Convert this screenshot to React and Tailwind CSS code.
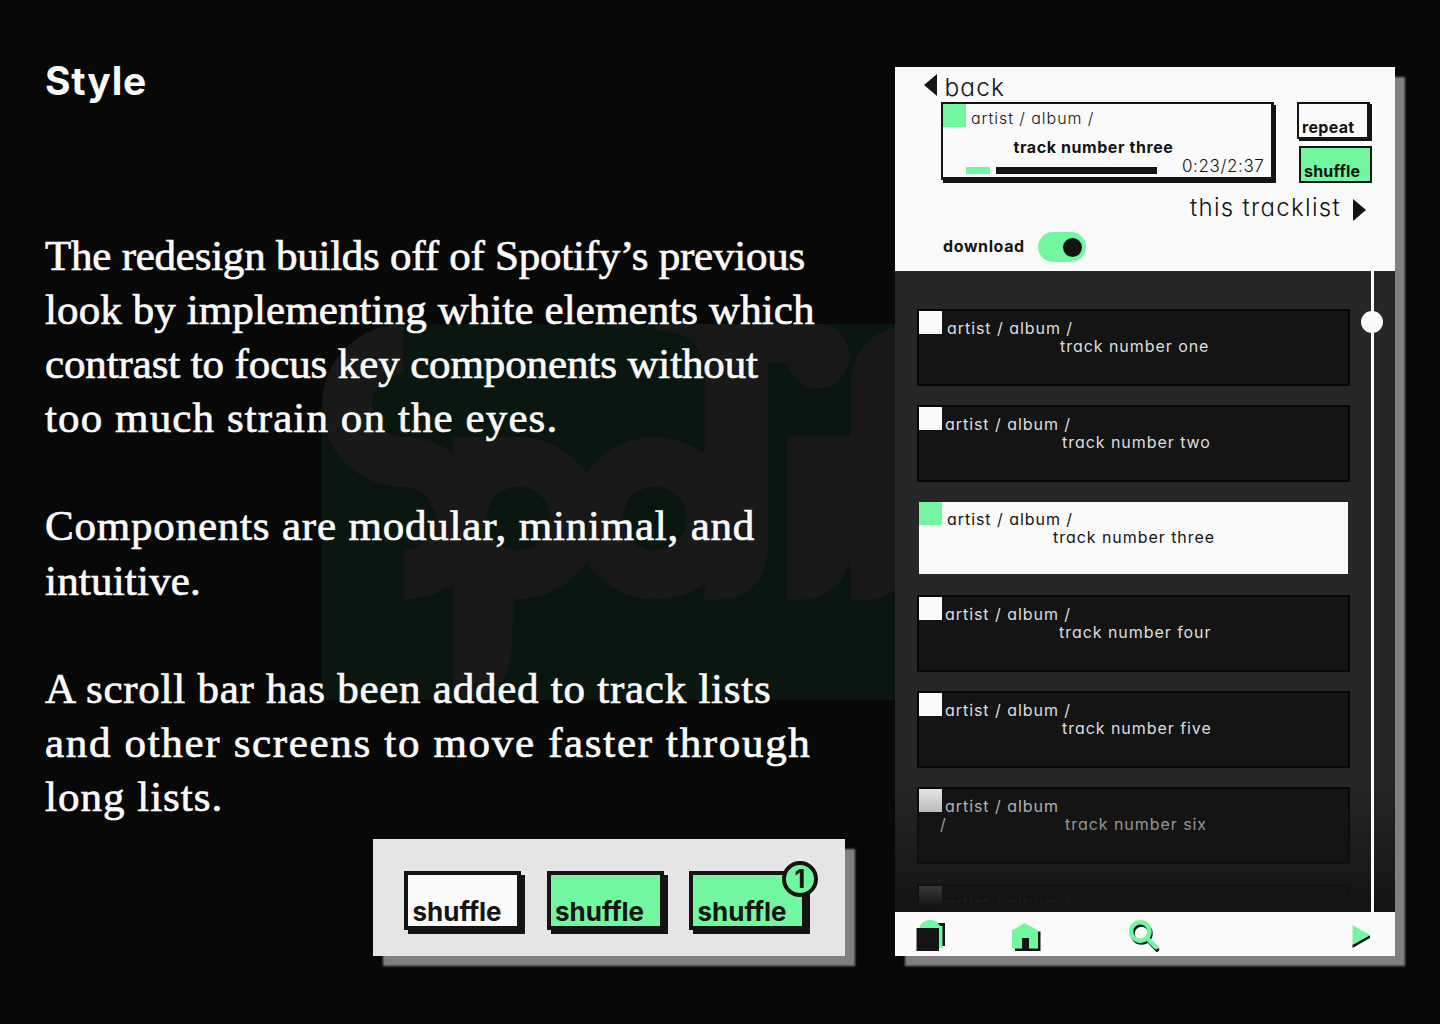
import React from 'react';

const artistText = 'text-[16px] leading-none tracking-[0.95px] whitespace-nowrap [font-feature-settings:"cv11"]';

const tracks = [
  { name: 'one', art: 'pl-[5px]', title: 'ml-[141px]', gap: 'mt-[38px]' },
  { name: 'two', art: 'pl-[3px]', title: 'ml-[143px]', gap: 'mt-[19px]' },
  { name: 'three', art: 'pl-[5px]', title: 'ml-[134px]', gap: 'mt-[18px]', active: true },
  { name: 'four', art: 'pl-[3px]', title: 'ml-[140px]', gap: 'mt-[18px]' },
  { name: 'five', art: 'pl-[3px]', title: 'ml-[143px]', gap: 'mt-[19px]' },
  { name: 'six', art: 'pl-[3px]', title: 'ml-[118px]', gap: 'mt-[19px]', wrapped: true },
  { name: '', art: 'pl-[3px]', title: 'ml-[143px]', gap: 'mt-[20px]' },
];

const copy = [
  ['The redesign builds off of Spotify’s previous', 'tracking-[-0.24px]'],
  ['look by implementing white elements which', 'tracking-[0.1px]'],
  ['contrast to focus key components without', 'tracking-[-0.12px]'],
  ['too much strain on the eyes.', 'tracking-[1.1px]'],
  ['', ''],
  ['Components are modular, minimal, and', 'tracking-[0.8px]'],
  ['intuitive.', 'tracking-[0.2px]'],
  ['', ''],
  ['A scroll bar has been added to track lists', 'tracking-[0.75px]'],
  ['and other screens to move faster through', 'tracking-[1.67px]'],
  ['long lists.', 'tracking-[1px]'],
];

function Watermark() {
  return (
    <svg className="absolute left-[322px] top-[324px]" width="573" height="376" viewBox="31 41 1498 1129" preserveAspectRatio="none" aria-hidden="true">
      <path d="M244 41H1529V1170H31V290C31 152 126 41 244 41Z" fill="#0a1710" />
      <g fill="#191919">
        <path d="M244 41C126 41 31 152 31 288S126 530 244 530C290 530 328 573 328 625S290 720 244 720V868C290 868 337 852 374 822V430C337 396 290 380 244 380C198 380 162 338 162 285S198 190 244 190Z" />
        <path fillRule="evenodd" d="M374 380H545C615 380 680 420 723 490C766 420 830 380 901 380C950 380 995 398 1031 430V190C1031 100 980 60 901 60V41H1328C1373 41 1410 83 1410 138S1373 234 1328 234C1290 234 1256 203 1246 158H1197V700C1197 805 1145 868 1075 868H1031V822C995 852 950 868 901 868C830 868 766 828 723 758C680 828 615 868 530 868C530 1000 528 1060 508 1100C482 1145 430 1166 374 1170ZM545 530C499 530 462 573 462 625S499 720 545 720S628 677 628 625S591 530 545 530ZM901 530C855 530 818 573 818 625S855 720 901 720S984 677 984 625S947 530 901 530Z" />
        <path d="M1247 378H1412V230C1412 140 1460 70 1529 50V838C1508 858 1485 868 1460 868H1412V740C1402 815 1350 868 1285 868H1247Z" />
      </g>
    </svg>
  );
}

function SampleButton({ className, badge }) {
  return (
    <div className={`relative flex h-[59px] w-[117px] items-end border-4 border-[#141414] pb-px pl-[4.5px] shadow-[4px_4px_0_#141414] ${className}`}>
      <span className="text-[26px] leading-none font-bold text-[#141414]">shuffle</span>
      {badge && (
        <span className="absolute -top-[14px] left-[89px] flex size-[36px] items-center justify-center rounded-full border-4 border-[#141414] bg-[#72f7a0] text-[25px] leading-none font-bold text-[#141414]">
          {badge}
        </span>
      )}
    </div>
  );
}

function Track({ track }) {
  const { name, art, title, gap, active, wrapped } = track;
  return (
    <div className={`ml-[22px] h-[77px] w-[433px] shrink-0 ${gap}`}>
      <div className={active ? 'm-[2px] h-[72px] w-[429px] bg-[#fafafa] text-[#141414]' : 'h-full border-[2px] border-[#070707] bg-[#141414] text-[#dedede]'}>
        <div className="flex h-[27px]">
          <div className={active ? 'size-[23px] bg-[#72f7a0]' : 'size-[23px] bg-[#fafafa]'} />
          <span className={`pt-[9px] ${artistText} ${art}`}>{wrapped ? 'artist / album' : 'artist / album /'}</span>
        </div>
        <div className="flex">
          {wrapped && <span className={`ml-[21px] w-[7px] ${artistText}`}>/</span>}
          {name && <span className={`${artistText} ${title}`}>track number {name}</span>}
        </div>
      </div>
    </div>
  );
}

function Phone() {
  return (
    <section className="mt-[67px] flex h-[889px] w-[500px] shrink-0 flex-col bg-[#fafafa] text-[#141414] shadow-[10px_10px_2px_#808080]">
      <header className="flex h-[204px] shrink-0 flex-col">
        <div className="flex h-[35px] pt-[8px] pl-[29px]">
          <svg className="-mt-px" width="13" height="22" viewBox="0 0 13 22"><path d="M13 0v22L0 11z" fill="#141414" /></svg>
          <span className="ml-[7.500px] text-[24.500px] leading-[24px] font-[350] tracking-[1.1px] [font-feature-settings:'cv11']">back</span>
        </div>
        <div className="flex h-[81px] pl-[46px]">
          <div className="h-[78px] w-[333px] border-t-2 border-r-3 border-b-3 border-l-2 border-[#141414] shadow-[2px_3px_0_#141414]">
            <div className="flex h-[35px]">
              <div className="size-[23px] bg-[#72f7a0]" />
              <span className={`pt-[6px] pl-[5px] font-[350] ${artistText}`}>artist / album /</span>
            </div>
            <div className="h-[15px] pl-[70.500px] text-[16px] leading-none font-bold tracking-[0.58px]">track number three</div>
            <div className="flex h-[22px] items-start pl-[23px]">
              <div className="mt-[13px] h-[6.5px] w-[24px] bg-[#72f7a0]" />
              <div className="mt-[13px] ml-[6px] h-[6.5px] w-[161px] bg-[#141414]" />
              <span className="mt-[4px] ml-[25px] text-[17px] leading-none font-light tracking-[0.6px]">0:23/2:37</span>
            </div>
          </div>
          <div className="ml-[23px] w-[75px]">
            <div className="flex h-[37px] w-[73px] items-end border-2 border-r-3 border-[#141414] pb-[2px] pl-[3px] shadow-[2px_2px_0_#141414]">
              <span className="text-[16px] leading-none font-bold tracking-[0.3px]">repeat</span>
            </div>
            <div className="mt-[7px] ml-[2px] flex h-[37px] w-[73px] items-end border-2 border-[#141414] bg-[#72f7a0] pb-[2px] pl-[3px]">
              <span className="text-[16px] leading-none font-bold tracking-[0.2px]">shuffle</span>
            </div>
          </div>
        </div>
        <div className="mt-[13px] flex h-[24px] justify-end pr-[29px]">
          <span className="text-[24px] leading-none font-[350] tracking-[1.3px] [font-feature-settings:'cv11']">this tracklist</span>
          <svg className="mt-[3px] ml-[12px]" width="13" height="22" viewBox="0 0 13 22"><path d="M0 0v22L13 11z" fill="#141414" /></svg>
        </div>
        <div className="mt-[12px] flex h-[30px] pl-[48px]">
          <span className="mt-[6px] w-[95px] text-[16px] leading-none font-bold tracking-[0.6px]">download</span>
          <span className="flex h-[30px] w-[48px] items-center justify-end rounded-full bg-[#72f7a0] pr-[4px]">
            <span className="size-[19px] rounded-full bg-[#141414]" />
          </span>
        </div>
      </header>
      <div className="relative flex h-[641px] flex-col overflow-hidden bg-[#272727]">
        {tracks.map((t) => <Track key={t.name} track={t} />)}
        <div className="absolute inset-x-0 bottom-0 h-[135px] bg-linear-to-b from-[#14141400] to-[#141414] to-[96%]" />
        <div className="absolute top-0 left-[476px] h-full w-[2.5px] bg-[#fafafa]" />
        <div className="absolute top-[39.5px] left-[466px] size-[22px] rounded-full bg-[#fafafa]" />
      </div>
      <nav className="flex h-[44px] items-start pt-[7px] pl-[21px]">
        <svg width="30" height="34" viewBox="0 0 30 34">
          <path d="M7 4h22v23H7z" fill="#141414" />
          <path d="M3.500 8C5.500 3 10 1 14.500 1S22 3 24 7h2.500v22H5z" fill="#72f7a0" />
          <path d="M.5 9H23v23H.5z" fill="#141414" />
        </svg>
        <svg className="ml-[64px]" width="32" height="34" viewBox="0 0 32 34">
          <path d="M5 29h2L28 12.500h2.500V32H5z" fill="#141414" />
          <path d="M2 11.500 14.500 4 28 11.500v18h-9V19h-7v10.500H2z" fill="#72f7a0" />
          <path d="M12 19h7v11h-7z" fill="#141414" />
        </svg>
        <svg className="ml-[86px]" width="34" height="36" viewBox="0 0 34 36" fill="none" strokeLinecap="round">
          <g stroke="#141414" strokeWidth="4.500"><circle cx="13.500" cy="14.500" r="9" /><path d="m20.500 21.500 8.500 9" /></g>
          <g stroke="#72f7a0" strokeWidth="4.500"><circle cx="12.300" cy="12.500" r="9.200" /><path d="m19.300 19.500 8.700 8.700" /></g>
        </svg>
        <svg className="ml-[189px]" width="20" height="34" viewBox="0 0 20 34">
          <path d="M1.500 25.500v3.500L19 19v-3z" fill="#141414" />
          <path d="M1.500 6v20L19 16z" fill="#72f7a0" />
        </svg>
      </nav>
    </section>
  );
}

export default function App() {
  return (
    <main className="relative flex h-[1024px] w-[1440px] overflow-hidden bg-[#080808] font-[Inter,sans-serif]">
      <Watermark />
      <section className="relative w-[895px] shrink-0 pt-[61px] pl-[45px]">
        <h1 className="h-[168px] text-[39px] leading-[40px] font-bold tracking-[0.8px] text-[#fafafa]">Style</h1>
        <div className="h-[594px] font-['Liberation_Serif',serif] text-[43px] leading-[54px] text-[#fafafa] [-webkit-text-stroke:0.7px_#fafafa]">
          {copy.map(([line, tracking], i) => (
            <p key={i} className={`h-[54.1px] whitespace-nowrap ${tracking}`}>{line}</p>
          ))}
        </div>
        <div className="mt-[16px] ml-[328px] flex h-[117px] w-[472px] gap-[25.5px] bg-[#e5e5e5] pt-[32px] pl-[31px] shadow-[10px_10px_2px_#808080]">
          <SampleButton className="bg-[#fafafa]" />
          <SampleButton className="bg-[#72f7a0]" />
          <SampleButton className="bg-[#72f7a0]" badge="1" />
        </div>
      </section>
      <Phone />
    </main>
  );
}
